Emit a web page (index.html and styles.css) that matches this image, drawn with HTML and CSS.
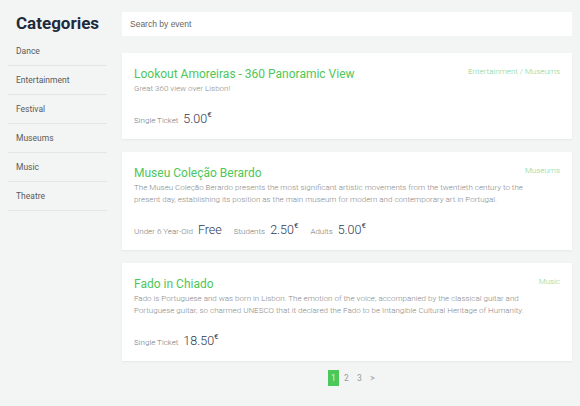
FILE: index.html
```html
<!DOCTYPE html>
<html>
<head>
<meta charset="utf-8">
<link rel="stylesheet" href="styles.css">
</head>
<body>
<div class="page">
  <aside class="sidebar">
    <h1 class="side-title">Categories</h1>
    <ul class="cat-list">
      <li class="cat-item">Dance</li>
      <li class="cat-item">Entertainment</li>
      <li class="cat-item">Festival</li>
      <li class="cat-item">Museums</li>
      <li class="cat-item">Music</li>
      <li class="cat-item">Theatre</li>
    </ul>
  </aside>
  <main class="main">
    <div class="search"><input class="search-input" type="text" placeholder="Search by event"></div>

    <article class="card">
      <div class="card-head">
        <h2 class="card-title">Lookout Amoreiras - 360 Panoramic View</h2>
        <span class="card-cat">Entertainment / Museums</span>
      </div>
      <p class="card-desc">Great 360 view over Lisbon!</p>
      <div class="prices">
        <span class="price-item"><span class="price-label">Single Ticket</span><span class="price-val">5.00<sup class="eur">€</sup></span></span>
      </div>
    </article>

    <article class="card">
      <div class="card-head">
        <h2 class="card-title">Museu Coleção Berardo</h2>
        <span class="card-cat">Museums</span>
      </div>
      <p class="card-desc">The Museu Coleção Berardo presents the most significant artistic movements from the twentieth century to the present day, establishing its position as the main museum for modern and contemporary art in Portugal.</p>
      <div class="prices">
        <span class="price-item"><span class="price-label">Under 6 Year-Old</span><span class="price-val">Free</span></span>
        <span class="price-item"><span class="price-label">Students</span><span class="price-val">2.50<sup class="eur">€</sup></span></span>
        <span class="price-item"><span class="price-label">Adults</span><span class="price-val">5.00<sup class="eur">€</sup></span></span>
      </div>
    </article>

    <article class="card">
      <div class="card-head">
        <h2 class="card-title">Fado in Chiado</h2>
        <span class="card-cat">Music</span>
      </div>
      <p class="card-desc">Fado is Portuguese and was born in Lisbon. The emotion of the voice, accompanied by the classical guitar and Portuguese guitar, so charmed UNESCO that it declared the Fado to be Intangible Cultural Heritage of Humanity.</p>
      <div class="prices">
        <span class="price-item"><span class="price-label">Single Ticket</span><span class="price-val">18.50<sup class="eur">€</sup></span></span>
      </div>
    </article>

    <nav class="pager">
      <span class="page-link active">1</span>
      <span class="page-link">2</span>
      <span class="page-link">3</span>
      <span class="page-link">&gt;</span>
    </nav>
  </main>
</div>
</body>
</html>
```

FILE: styles.css
```css
* { box-sizing: border-box; }
html, body { margin: 0; padding: 0; }
body {
  background: #f3f5f5;
  font-family: Roboto, "Liberation Sans", sans-serif;
  width: 580px;
  height: 406px;
  overflow: hidden;
}
.page {
  display: flex;
  padding: 0 8px;
}
.sidebar {
  width: 99px;
  flex: none;
  padding-top: 10px;
}
.side-title {
  margin: 0;
  padding-left: 8px;
  font-size: 17px;
  line-height: 27px;
  font-weight: 700;
  color: #1f2a3c;
}
.cat-list {
  list-style: none;
  margin: 0;
  padding: 0;
}
.cat-item {
  height: 29px;
  line-height: 28px;
  padding-left: 8px;
  font-size: 8.5px;
  color: #5a5a5a;
  border-bottom: 1px solid #e3e6e6;
}
.main {
  width: 450px;
  margin-left: 15px;
  padding-top: 12px;
}
.search {
  background: #fff;
  height: 24px;
  display: flex;
  align-items: center;
  padding-left: 8px;
}
.search-input {
  border: none;
  outline: none;
  background: transparent;
  width: 100%;
  padding: 0;
  font-family: "Liberation Sans", Arial, sans-serif;
  font-size: 8.5px;
  color: #555;
}
.search-input::placeholder { color: #666; }
.card {
  background: #fff;
  margin-top: 13px;
  padding: 13px 12px 12px 12px;
  box-shadow: 0 1px 2px rgba(0,0,0,0.06);
}
.search + .card { margin-top: 17px; }
.card-head {
  display: flex;
  justify-content: space-between;
  align-items: flex-start;
}
.card-title {
  margin: 0;
  font-size: 12px;
  line-height: 16px;
  font-weight: 400;
  color: #4ec65a;
}
.card-cat {
  font-size: 8px;
  line-height: 12px;
  font-weight: 300;
  color: #86d491;
  white-space: nowrap;
}
.card-desc {
  margin: 1px 0 0;
  font-size: 8px;
  line-height: 12.5px;
  font-weight: 300;
  color: #888;
  padding-right: 20px;
}
.prices {
  display: flex;
  align-items: baseline;
  gap: 12px;
  margin-top: 15px;
  height: 16px;
}
.price-item {
  display: flex;
  align-items: baseline;
  gap: 5px;
}
.price-label {
  font-size: 8px;
  font-weight: 300;
  color: #777;
}
.price-val {
  font-size: 12.5px;
  font-weight: 300;
  color: #2e3a52;
}
.eur {
  font-size: 8px;
  font-weight: 400;
  vertical-align: 6px;
  line-height: 0;
}
.pager {
  display: flex;
  justify-content: center;
  gap: 2px;
  margin-top: 9px;
  padding-left: 12px;
}
.page-link {
  width: 11px;
  height: 16px;
  line-height: 16px;
  text-align: center;
  font-size: 8.5px;
  color: #999;
}
.page-link.active {
  background: #4cc75a;
  color: #d8f5dc;
}
```
